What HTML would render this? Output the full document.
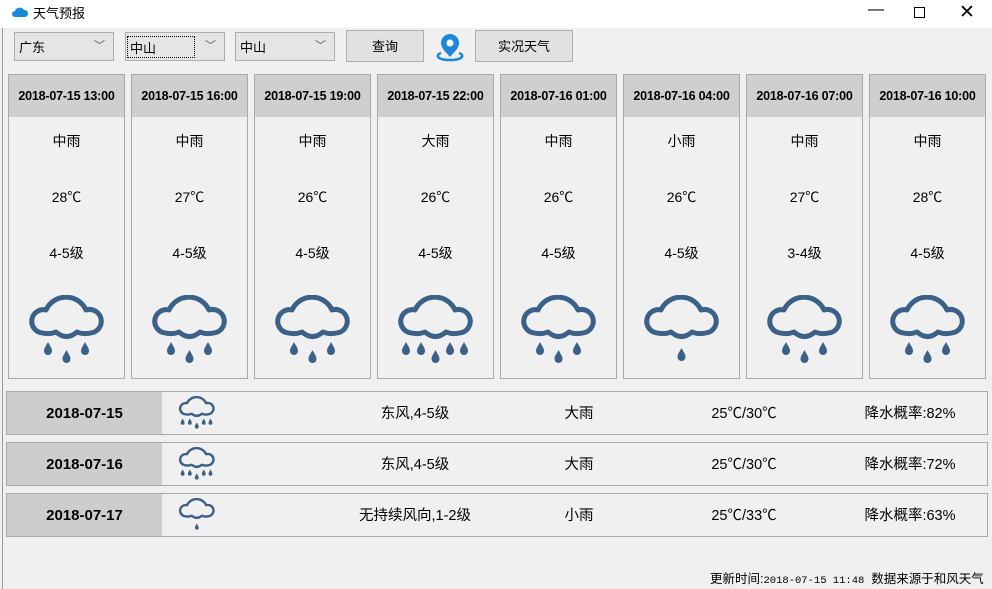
<!DOCTYPE html>
<html><head><meta charset="utf-8">
<style>
*{margin:0;padding:0;box-sizing:border-box}
body{width:992px;height:589px;background:#f0f0f0;font-family:"Liberation Sans","Noto Sans CJK SC",sans-serif;font-size:14px;color:#000;position:relative;overflow:hidden}
.abs{position:absolute}
.title{left:0;top:0;width:992px;height:28px;background:#fff}
.sel{top:32px;height:29px;border:1px solid #adadad;background:#e5e5e5;font-size:13px;padding:4px 0 0 4px}
.sel .ar{position:absolute;right:8px;top:4px;font-size:11px;color:#555}
.btn{top:30px;height:32px;border:1px solid #adadad;background:#e1e1e1;font-size:13px;text-align:center;line-height:32px}
.card{top:74px;width:117px;height:305px;border:1px solid #a9a9a9;background:#f0f0f0}
.card .hd{height:42px;background:#cfcfcf;font-weight:bold;font-size:12.5px;text-align:center;line-height:42px;letter-spacing:-0.2px}
.card .t{position:absolute;left:0;width:100%;text-align:center;font-size:14px}
.card svg{position:absolute;left:20px;top:220px}
.row{left:6px;width:982px;height:44px;border:1px solid #a9a9a9;background:#f0f0f0}
.row .d{position:absolute;left:0;top:0;width:155px;height:42px;background:#cdcdcd;font-weight:bold;font-size:15px;text-align:center;line-height:44px}
.row .c{position:absolute;top:0;line-height:44px;font-size:14.5px;transform:translateX(-50%);white-space:nowrap}
.row svg{position:absolute;left:171px;top:4px}
</style></head><body>
<svg width="0" height="0" style="position:absolute">
<defs>
<path id="cl" d="M11,37.5 A11.65,11.65 0 0 1 17,15 A22,22 0 0 1 57,15 A11.65,11.65 0 0 1 64,37.5 Q55,40 48,37 Q37.5,46 27,37 Q20,40 11,37.5 Z" fill="none" stroke="#3b6189" stroke-width="5" stroke-linejoin="round"/>
<path id="dr" d="M0,-7 C2,-3 4,-1 4,2 A4,4 0 0 1 -4,2 C-4,-1 -2,-3 0,-7Z" fill="#3b6189"/>
<g id="mid"><use href="#cl"/><use href="#dr" x="19" y="54"/><use href="#dr" x="37.5" y="62"/><use href="#dr" x="56" y="54"/></g>
<g id="big"><use href="#cl"/><use href="#dr" x="8" y="54"/><use href="#dr" x="23" y="54"/><use href="#dr" x="37.5" y="62"/><use href="#dr" x="52" y="54"/><use href="#dr" x="66" y="54"/></g>
<g id="sm"><use href="#cl"/><use href="#dr" x="37.5" y="60"/></g>
</defs></svg>

<div class="abs title"></div>
<svg class="abs" style="left:12px;top:6px" width="16" height="12"><path d="M3,11 A3,3 0 0 1 3,5 A5,5 0 0 1 12,4 A3.5,3.5 0 0 1 13,11Z" fill="#1e88d8"/></svg>
<div class="abs" style="left:33px;top:3px;font-size:13px">天气预报</div>
<div class="abs" style="left:868px;top:1px;font-size:16px">&#8212;</div>
<div class="abs" style="left:914px;top:7px;width:11px;height:11px;border:1px solid #000"></div>
<div class="abs" style="left:959px;top:1px;font-size:19px;font-weight:300">✕</div>
<div class="abs" style="left:2px;top:28px;width:1px;height:561px;background:#9a9a9a"></div>

<div class="abs sel" style="left:14px;width:100px">广东<span class="ar">﹀</span></div>
<div class="abs sel" style="left:125px;width:100px"><span style="outline:1px dotted #000;display:inline-block;width:66px;height:20px;margin:0 0 0 -2px;padding:1px 0 0 2px">中山</span><span class="ar">﹀</span></div>
<div class="abs sel" style="left:235px;width:100px">中山<span class="ar">﹀</span></div>
<div class="abs btn" style="left:346px;width:78px">查询</div>
<svg class="abs" style="left:433px;top:31px" width="34" height="31"><path d="M17,3 A9,9 0 0 1 26,12 C26,18 20,22 17,26 C14,22 8,18 8,12 A9,9 0 0 1 17,3Z" fill="#1e88d8"/><circle cx="17" cy="12" r="3.5" fill="#fff"/><path d="M8,22 C2,24 4,29 17,29 C30,29 32,24 26,22" fill="none" stroke="#1e88d8" stroke-width="2.5"/></svg>
<div class="abs btn" style="left:475px;width:98px">实况天气</div>

<div class="abs card" style="left:8px"><div class="hd">2018-07-15 13:00</div><div class="t" style="top:56px">中雨</div><div class="t" style="top:112px">28℃</div><div class="t" style="top:168px">4-5级</div><svg width="80" height="75"><use href="#mid"/></svg></div>
<div class="abs card" style="left:131px"><div class="hd">2018-07-15 16:00</div><div class="t" style="top:56px">中雨</div><div class="t" style="top:112px">27℃</div><div class="t" style="top:168px">4-5级</div><svg width="80" height="75"><use href="#mid"/></svg></div>
<div class="abs card" style="left:254px"><div class="hd">2018-07-15 19:00</div><div class="t" style="top:56px">中雨</div><div class="t" style="top:112px">26℃</div><div class="t" style="top:168px">4-5级</div><svg width="80" height="75"><use href="#mid"/></svg></div>
<div class="abs card" style="left:377px"><div class="hd">2018-07-15 22:00</div><div class="t" style="top:56px">大雨</div><div class="t" style="top:112px">26℃</div><div class="t" style="top:168px">4-5级</div><svg width="80" height="75"><use href="#big"/></svg></div>
<div class="abs card" style="left:500px"><div class="hd">2018-07-16 01:00</div><div class="t" style="top:56px">中雨</div><div class="t" style="top:112px">26℃</div><div class="t" style="top:168px">4-5级</div><svg width="80" height="75"><use href="#mid"/></svg></div>
<div class="abs card" style="left:623px"><div class="hd">2018-07-16 04:00</div><div class="t" style="top:56px">小雨</div><div class="t" style="top:112px">26℃</div><div class="t" style="top:168px">4-5级</div><svg width="80" height="75"><use href="#sm"/></svg></div>
<div class="abs card" style="left:746px"><div class="hd">2018-07-16 07:00</div><div class="t" style="top:56px">中雨</div><div class="t" style="top:112px">27℃</div><div class="t" style="top:168px">3-4级</div><svg width="80" height="75"><use href="#mid"/></svg></div>
<div class="abs card" style="left:869px"><div class="hd">2018-07-16 10:00</div><div class="t" style="top:56px">中雨</div><div class="t" style="top:112px">28℃</div><div class="t" style="top:168px">4-5级</div><svg width="80" height="75"><use href="#mid"/></svg></div>

<div class="abs row" style="top:391px"><div class="d">2018-07-15</div><svg width="40" height="36" viewBox="0 0 80 75"><use href="#big"/></svg><div class="c" style="left:408px">东风,4-5级</div><div class="c" style="left:572px">大雨</div><div class="c" style="left:737px">25℃/30℃</div><div class="c" style="left:903px">降水概率:82%</div></div>
<div class="abs row" style="top:442px"><div class="d">2018-07-16</div><svg width="40" height="36" viewBox="0 0 80 75"><use href="#big"/></svg><div class="c" style="left:408px">东风,4-5级</div><div class="c" style="left:572px">大雨</div><div class="c" style="left:737px">25℃/30℃</div><div class="c" style="left:903px">降水概率:72%</div></div>
<div class="abs row" style="top:493px"><div class="d">2018-07-17</div><svg width="40" height="36" viewBox="0 0 80 75"><use href="#sm"/></svg><div class="c" style="left:408px">无持续风向,1-2级</div><div class="c" style="left:572px">小雨</div><div class="c" style="left:737px">25℃/33℃</div><div class="c" style="left:903px">降水概率:63%</div></div>

<div class="abs" style="left:710px;top:568px;font-size:12.5px;white-space:nowrap">更新时间:<span style="font-family:'Liberation Mono',monospace;font-size:10.5px">2018-07-15 11:48</span>&nbsp; 数据来源于和风天气</div>
</body></html>
